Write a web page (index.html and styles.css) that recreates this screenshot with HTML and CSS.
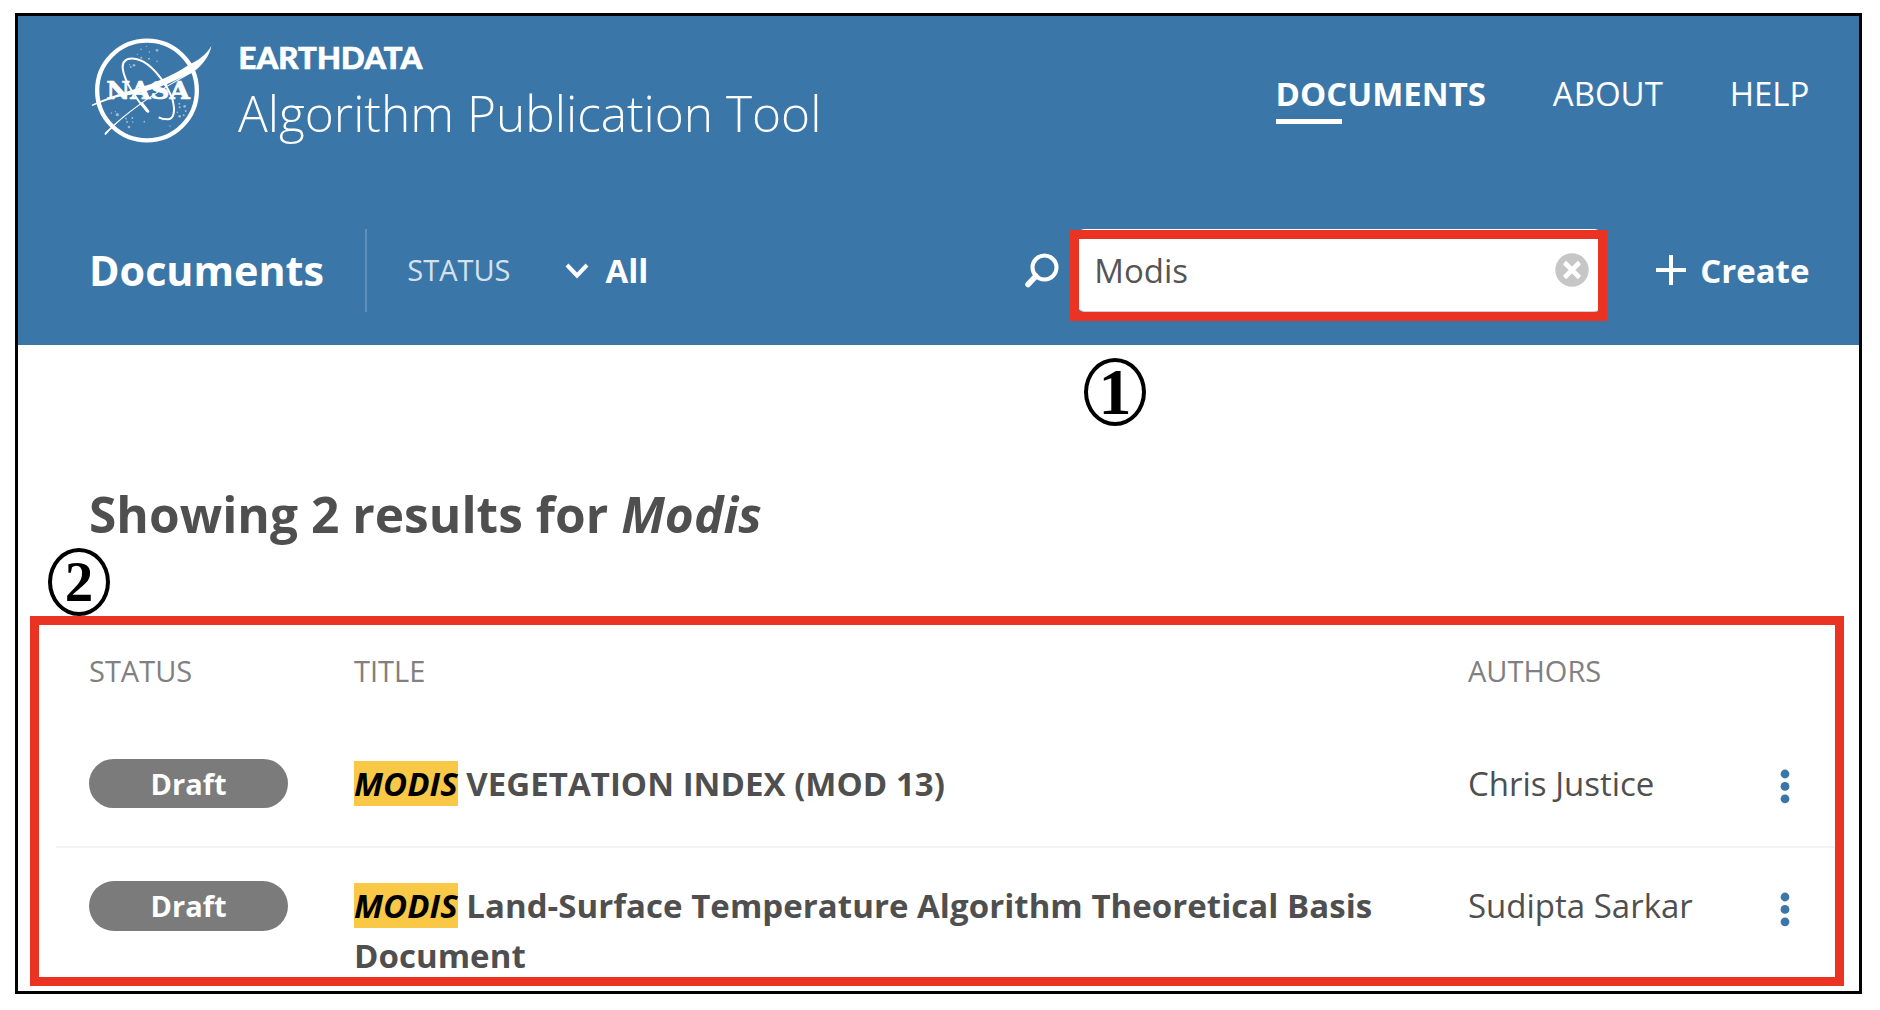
FILE: index.html
```
<!DOCTYPE html>
<html lang="en">
<head>
<meta charset="utf-8">
<title>Algorithm Publication Tool - Documents</title>
<link rel="stylesheet" href="styles.css">
</head>
<body>
<div class="frame">
  <header class="header">
    <div class="masthead">
      <svg class="logo" viewBox="0 0 420 390" fill="none" stroke="#fff">
        <circle cx="201" cy="196.500" r="149.500" stroke-width="13"/>
        <text class="logo-text" x="79" y="223" textLength="250" lengthAdjust="spacingAndGlyphs">NASA</text>
        <path d="M202 260C170 224 133 170 128 130C126 100 152 92 190 110C225 130 262 180 277 222C288 262 280 284 262 283C252 283 244 281 236 277" stroke-width="6"/>
        <path d="M186 236L204 259" stroke-width="8" stroke-linecap="round"/>
        <path d="M35 239C110 204 160 196 215 176C270 153 300 137 327 119C355 106 376 92 394 63C388 96 366 120 340 142C262 182 150 250 77 330C72 329 73 326 76 322C135 264 215 206 318 149C250 188 180 204 140 211C95 218 60 235 37 243Z" fill="#fff" stroke="none"/>
        <g class="stars">
          <circle cx="199" cy="64" r="2"/><circle cx="183" cy="73" r="2.500"/><circle cx="208" cy="81" r="2.500"/><circle cx="231" cy="76" r="4"/><circle cx="172" cy="88" r="2"/><circle cx="184" cy="98" r="3"/><circle cx="207" cy="101" r="3"/><circle cx="231" cy="109" r="2.500"/><circle cx="149" cy="119" r="2"/><circle cx="162" cy="121" r="4"/><circle cx="152" cy="126" r="3"/>
          <circle cx="94" cy="264" r="2.500"/><circle cx="112" cy="269" r="5"/><circle cx="106" cy="260" r="2"/><circle cx="138" cy="281" r="2.500"/><circle cx="157" cy="279" r="3"/><circle cx="141" cy="291" r="3"/><circle cx="158" cy="291" r="2.500"/><circle cx="147" cy="306" r="4"/><circle cx="193" cy="290" r="2.500"/>
          <circle cx="298" cy="236" r="3"/><circle cx="314" cy="244" r="4"/><circle cx="299" cy="247" r="3"/><circle cx="317" cy="258" r="3"/><circle cx="292" cy="262" r="2.500"/><circle cx="299" cy="274" r="4"/><circle cx="311" cy="271" r="3"/><circle cx="270" cy="303" r="2"/><circle cx="248" cy="284" r="2"/>
        </g>
      </svg>
      <div class="brand">
        <span class="brand-name">EARTHDATA</span>
        <span class="brand-tool">Algorithm Publication Tool</span>
      </div>
      <nav class="nav">
        <a class="nav-link active">DOCUMENTS</a>
        <a class="nav-link">ABOUT</a>
        <a class="nav-link">HELP</a>
      </nav>
    </div>
    <div class="toolbar">
      <h1 class="page-title">Documents</h1>
      <div class="filter">
        <span class="filter-label">STATUS</span>
        <svg class="chevron" viewBox="0 0 24 17"><path d="M2 3L12 13.500L22 3" fill="none" stroke="#fff" stroke-width="4"/></svg>
        <span class="filter-value">All</span>
      </div>
      <svg class="search-icon" viewBox="0 0 34 35" fill="none" stroke="#fff"><circle cx="19.500" cy="14.500" r="12" stroke-width="4"/><path d="M11 23L3 31.500" stroke-width="5.500" stroke-linecap="round"/></svg>
      <div class="search">
        <span class="query">Modis</span>
        <svg class="clear" viewBox="0 0 34 34"><circle cx="17" cy="17" r="16.700" fill="#c6c6c6"/><path d="M9.500 9.500L24.500 24.500M24.500 9.500L9.500 24.500" stroke="#fff" stroke-width="4.600"/></svg>
      </div>
      <a class="create">
        <svg class="plus" viewBox="0 0 30 30"><path d="M15 0V30M0 15H30" stroke="#fff" stroke-width="4"/></svg>
        <span class="create-label">Create</span>
      </a>
    </div>
  </header>
  <main class="content">
    <h2 class="results">Showing 2 results for <em>Modis</em></h2>
    <div class="row head">
      <span>STATUS</span><span>TITLE</span><span>AUTHORS</span>
    </div>
    <div class="row">
      <span class="pill">Draft</span>
      <span class="doc-title"><mark>MODIS</mark> VEGETATION INDEX (MOD 13)</span>
      <span class="author">Chris Justice</span>
      <svg class="dots" viewBox="0 0 10 35"><circle cx="5" cy="5" r="4.400"/><circle cx="5" cy="17.400" r="4.400"/><circle cx="5" cy="29.800" r="4.400"/></svg>
    </div>
    <div class="row last">
      <span class="pill">Draft</span>
      <span class="doc-title"><mark>MODIS</mark> Land-Surface Temperature Algorithm Theoretical Basis Document</span>
      <span class="author">Sudipta Sarkar</span>
      <svg class="dots" viewBox="0 0 10 35"><circle cx="5" cy="5" r="4.400"/><circle cx="5" cy="17.400" r="4.400"/><circle cx="5" cy="29.800" r="4.400"/></svg>
    </div>
  </main>
  <div class="outline outline-search"></div>
  <div class="outline outline-table"></div>
  <div class="marker marker-1">1</div>
  <div class="marker marker-2">2</div>
</div>
</body>
</html>
```
FILE: styles.css
```
* { box-sizing: border-box; }
body {
  margin: 0;
  background: #fff;
  color: #4f4f4f;
  font: 33px/49.6px "Open Sans", sans-serif;
}
h1, h2 { margin: 0; }
.frame {
  position: relative;
  width: 1847px;
  height: 981px;
  margin: 13px 0 0 15px;
  border: 3px solid #000;
  overflow: hidden;
}
.header {
  height: 328.5px;
  background: #3b76a9;
  color: #fff;
}
.masthead {
  display: flex;
  height: 180px;
  padding: 9px 49.6px 0 62px;
}
.logo { width: 140px; height: 130px; flex: none; }
.logo-text {
  fill: #fff;
  stroke: #fff;
  stroke-width: 2px;
  font: bold 73px "DejaVu Serif", serif;
}
.stars { fill: #fff; stroke: none; opacity: .5; }
.brand {
  display: flex;
  flex-direction: column;
  padding: 16px 0 0 18px;
}
.brand-name {
  font: 900 31px/32px Lato, sans-serif;
  letter-spacing: .15px;
  -webkit-text-stroke: .7px #fff;
  padding-left: .5px;
}
.brand-tool {
  font-size: 49.6px;
  font-weight: 300;
  line-height: 66px;
  margin-top: 7px;
}
.nav {
  display: flex;
  gap: 66.8px;
  margin-left: auto;
  padding-top: 44.4px;
}
.nav-link { height: 56px; }
.active { font-weight: 700; }
.active::after {
  content: "";
  display: block;
  width: 66px;
  height: 5px;
  background: #fff;
}
.toolbar {
  display: flex;
  align-items: center;
  height: 148.5px;
  padding: 0 49.6px 0 71px;
}
.page-title { font-size: 41.3px; width: 275.6px; padding-top: 1px; }
.filter {
  display: flex;
  align-items: center;
  height: 82.6px;
  border-left: 2px solid #5f90ba;
  padding-left: 40.7px;
}
.filter-label { font-size: 29px; width: 157.7px; color: #d5e2ed; }
.chevron { width: 24px; height: 17px; margin-right: 16.5px; }
.filter-value { font-weight: 700; padding-top: 2px; }
.search-icon { width: 34px; height: 35px; margin-left: auto; margin-right: 17.5px; }
.search {
  display: flex;
  align-items: center;
  justify-content: space-between;
  width: 525px;
  height: 83px;
  padding: 0 13px 0 17.3px;
  margin-right: 53.6px;
  border-radius: 8px;
  border-bottom: 1.5px solid #d0d0d0;
  background: #fff;
  color: #555;
}
.query { padding-top: 2px; }
.clear { width: 34px; height: 34px; }
.create {
  display: flex;
  align-items: center;
  gap: 14.6px;
  font-weight: 700;
}
.create-label { padding-top: 2px; }
.plus { width: 30px; height: 30px; }
.content { padding-left: 38px; padding-right: 24px; }
.results {
  padding: 131px 0 0 33px;
  font-size: 49.6px;
  line-height: 76px;
  letter-spacing: .03px;
}
.row {
  display: grid;
  grid-template-columns: 265px 1114px 311.5px 1fr;
  align-items: start;
  height: 139px;
  padding: 49.5px 0 0 33px;
  border-bottom: 2px solid #f3f3f3;
}
.head {
  height: 63px;
  padding-top: 0;
  margin-top: 94.5px;
  border: 0;
  font-size: 29px;
  color: #808080;
}
.last { border: 0; padding-top: 33px; }
.pill {
  width: 199px;
  height: 49.6px;
  border-radius: 25px;
  background: #7b7b7b;
  color: #fff;
  font-size: 29px;
  font-weight: 700;
  text-align: center;
}
.doc-title { font-weight: 700; max-width: 1040px; letter-spacing: .04px; }
mark { background: #f9c846; color: #000; font-style: italic; }
.dots { width: 10px; height: 35px; margin-top: 10.5px; fill: #3b76a9; }
.outline { position: absolute; border: 9px solid #ea3323; }
.outline-search { left: 1052px; top: 214px; width: 537px; height: 91px; }
.outline-table { left: 12px; top: 600px; width: 1814px; height: 370px; }
.marker {
  position: absolute;
  width: 62px;
  height: 68px;
  border: 4px solid #000;
  border-radius: 50%;
  color: #000;
  font: bold 66px/60px "Liberation Serif", serif;
  text-align: center;
}
.marker-1 { left: 1066px; top: 342px; }
.marker-2 { left: 30px; top: 532px; font-size: 57px; line-height: 60px; }
```
